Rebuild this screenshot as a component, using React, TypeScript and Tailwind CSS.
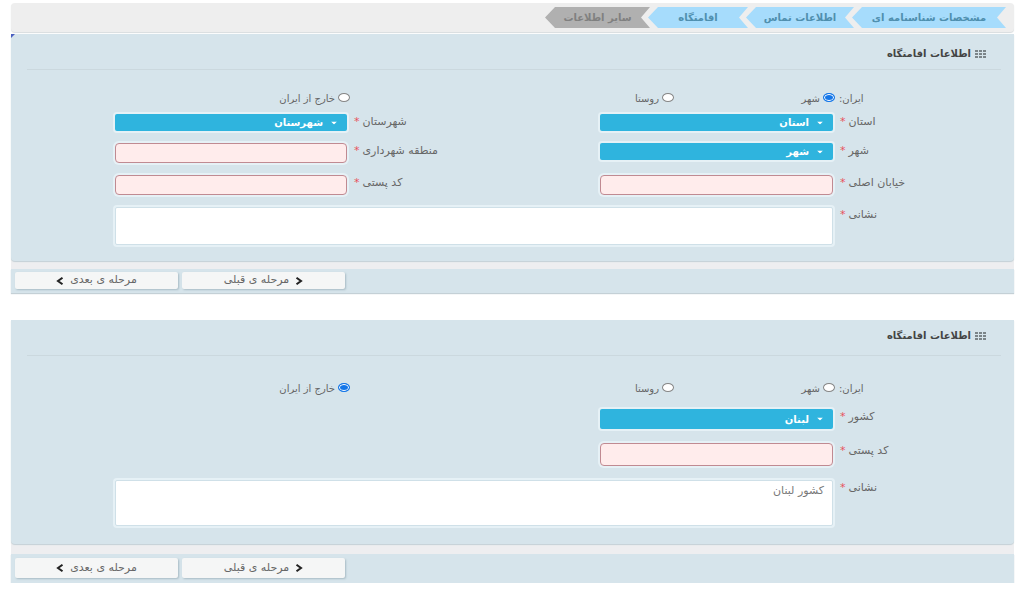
import { useId, useState } from "react";
import type { ReactNode } from "react";

const steps = [
  { title: "مشخصات شناسنامه ای", look: "w-[154px] bg-[#a6dcfc] text-[#4f8fae]" },
  { title: "اطلاعات تماس", look: "w-[108px] bg-[#a6dcfc] text-[#4f8fae]" },
  { title: "اقامتگاه", look: "w-[100px] bg-[#a6dcfc] text-[#4f8fae]" },
  { title: "سایر اطلاعات", look: "w-[105px] bg-[#b0b0b0] text-[#808080]" },
];

function Steps() {
  return (
    <nav className="flex h-[29px] items-center rounded bg-[#eeeeee] ps-2 shadow-[0_1px_1px_#d8dcde]">
      {steps.map((s) => (
        <a
          key={s.title}
          href="#"
          className={`-me-0.5 flex h-[21px] shrink-0 items-center justify-center text-[10px] font-bold [clip-path:polygon(0_50%,10px_0,100%_0,calc(100%-9px)_50%,100%_100%,10px_100%)] ${s.look}`}
        >
          {s.title}
        </a>
      ))}
    </nav>
  );
}

function GridIcon() {
  return (
    <svg viewBox="0 0 11 8" className="h-2 w-[11px] fill-[#7b8488]" aria-hidden="true">
      {[0, 4, 8].map((x) =>
        [0, 3, 6].map((y) => <rect key={`${x}-${y}`} x={x} y={y} width="3" height="2" />)
      )}
    </svg>
  );
}

function Chevron({ flip = false }: { flip?: boolean }) {
  return (
    <svg viewBox="0 0 8 8" className="size-2 fill-none stroke-[#222] stroke-2" aria-hidden="true">
      <path d={flip ? "M1.5 0.8L6 4L1.5 7.2" : "M6.5 0.8L2 4L6.5 7.2"} />
    </svg>
  );
}

function Label({ htmlFor, children }: { htmlFor: string; children: ReactNode }) {
  return (
    <label htmlFor={htmlFor} className="flex justify-end gap-[3px] pe-[7px] text-[11px] leading-4">
      {children}
      <span className="text-[#e8505b]">*</span>
    </label>
  );
}

const halo = "shadow-[0_0_0_2px_#e6f1f6]";

function Dropdown({ label, value, size }: { label: string; value: string; size: string }) {
  const id = useId();
  return (
    <>
      <Label htmlFor={id}>{label}</Label>
      <div className="relative self-start">
        <select
          id={id}
          className={`block w-full appearance-none rounded-xs bg-[#2fb4de] ps-6 text-[10px] font-bold text-white ${halo} ${size}`}
        >
          <option>{value}</option>
        </select>
        <svg
          viewBox="0 0 6 3"
          className="pointer-events-none absolute start-[10px] top-1/2 h-[3px] w-1.5 -translate-y-1/2 fill-white"
          aria-hidden="true"
        >
          <path d="M0 0H6L3 3Z" />
        </svg>
      </div>
    </>
  );
}

function TextField({ label, size }: { label: string; size: string }) {
  const id = useId();
  return (
    <>
      <Label htmlFor={id}>{label}</Label>
      <input
        id={id}
        type="text"
        className={`w-full self-start rounded-sm border border-[#c08a92] bg-[#ffecec] px-2 ${halo} ${size}`}
      />
    </>
  );
}

function Address({ text, size }: { text: string; size: string }) {
  const id = useId();
  return (
    <>
      <Label htmlFor={id}>نشانی</Label>
      <textarea
        id={id}
        defaultValue={text}
        className={`col-span-3 block w-full resize-none rounded-xs border border-[#cfe0e8] bg-white px-2 py-0.5 text-[11px] leading-4 text-[#777] ${halo} ${size}`}
      />
      <span />
    </>
  );
}

const columns = "grid grid-cols-[181fr_233fr_253fr_232fr_104fr]";

function Places({ initial }: { initial: string }) {
  const name = useId();
  const [place, setPlace] = useState(initial);
  const radio = (value: string) => (
    <label className="flex gap-[3px]">
      <input
        type="radio"
        name={name}
        checked={place === value}
        onChange={() => setPlace(value)}
        className="h-[9px] w-3 appearance-none rounded-[50%] border border-[#858585] bg-white checked:border-[#1476e8] checked:bg-[#1476e8] checked:shadow-[inset_0_0_0_1px_white]"
      />
      <span className="leading-3">{value}</span>
    </label>
  );
  return (
    <div role="radiogroup" aria-label="محل اقامت" className="grid grid-cols-[179fr_161fr_324fr_339fr]">
      <span className="pe-1 text-end leading-3">ایران:</span>
      {radio("شهر")}
      {radio("روستا")}
      {radio("خارج از ایران")}
    </div>
  );
}

function Heading({ space }: { space: string }) {
  return (
    <h2
      className={`ms-[13px] me-4 flex items-center gap-1 border-b border-[#cbd8de] ps-[15px] text-[10px] font-bold text-[#444] ${space}`}
    >
      <GridIcon />
      اطلاعات اقامتگاه
    </h2>
  );
}

function Actions({ space, size }: { space: string; size: string }) {
  const look =
    "flex w-[163px] items-center justify-center gap-1.5 rounded-xs bg-[#f5f6f6] text-[11px] text-[#666] shadow-[1px_1px_2px_#a9bcc5]";
  return (
    <div className={`flex justify-end gap-1 bg-[#d6e4eb] px-1 shadow-[0_1px_1px_#c4d0d6] ${space}`}>
      <button type="button" className={`${look} ${size}`}>
        <Chevron flip />
        مرحله ی قبلی
      </button>
      <button type="button" className={`${look} ${size}`}>
        مرحله ی بعدی
        <Chevron />
      </button>
    </div>
  );
}

export default function App() {
  return (
    <main
      dir="rtl"
      className="bg-white pt-[3px] pr-[10px] pl-[11px] font-['DejaVu_Sans',sans-serif] text-[10px] text-[#666]"
    >
      <Steps />
      <form className="mt-0.5 bg-[#eeeef0]">
        <section className="relative rounded-b bg-[#d6e4eb] pb-4 shadow-[0_1px_1px_#c4d0d6]">
          <span className="absolute top-0 left-0 size-1 bg-[#4a5fc0] [clip-path:polygon(0_0,100%_0,0_100%)]" />
          <Heading space="h-9 pt-1" />
          <div className="pt-[23px] pb-[9px]">
            <Places initial="شهر" />
          </div>
          <div className={`${columns} gap-y-3`}>
            <Dropdown label="استان" value="استان" size="h-[17px]" />
            <Dropdown label="شهرستان" value="شهرستان" size="h-[17px]" />
            <span />
            <Dropdown label="شهر" value="شهر" size="h-[17px]" />
            <TextField label="منطقه شهرداری" size="h-5" />
            <span />
            <TextField label="خیابان اصلی" size="h-5" />
            <TextField label="کد پستی" size="h-5" />
            <span />
            <Address text="" size="h-[38px]" />
          </div>
        </section>
        <div className="h-2" />
        <Actions space="pt-[3px] pb-1" size="h-[17px]" />
      </form>
      <form className="mt-[27px] bg-[#eeeef0]">
        <section className="rounded-b bg-[#d6e4eb] pb-[18px] shadow-[0_1px_1px_#c4d0d6]">
          <Heading space="h-9 pb-1" />
          <div className="pt-[27px] pb-3.5">
            <Places initial="خارج از ایران" />
          </div>
          <div className={`${columns} gap-y-3.5`}>
            <Dropdown label="کشور" value="لبنان" size="h-5" />
            <span className="col-span-3" />
            <TextField label="کد پستی" size="h-[23px]" />
            <span className="col-span-3" />
            <Address text="کشور لبنان" size="h-[46px]" />
          </div>
        </section>
        <div className="h-2.5" />
        <Actions space="pt-1 pb-[5px]" size="h-5" />
      </form>
    </main>
  );
}
